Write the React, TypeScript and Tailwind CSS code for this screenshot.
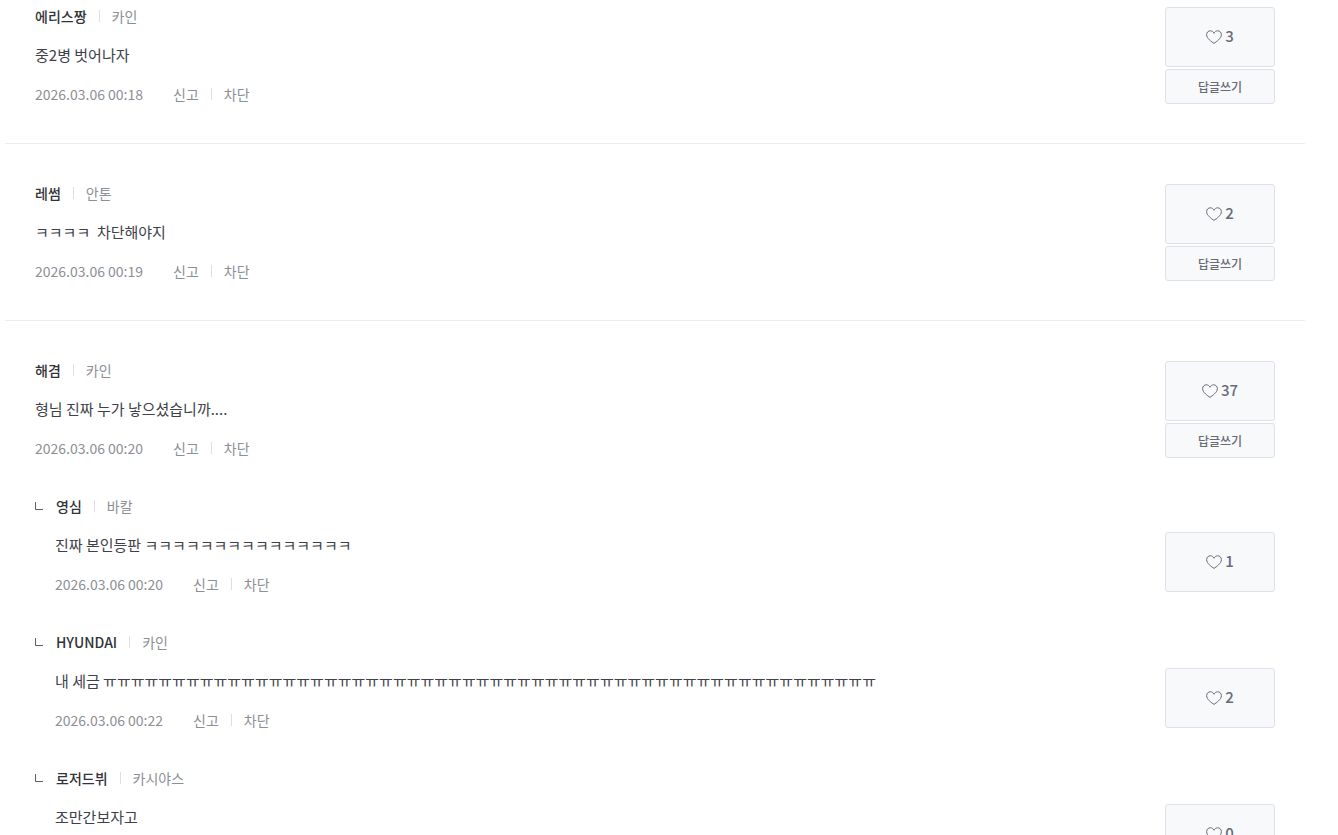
type Reply = {
  name: string;
  server: string;
  text: string;
  date?: string;
  likes: number;
};

type Comment = Reply & { replies?: Reply[] };

const COMMENTS: Comment[] = [
  { name: "에리스짱", server: "카인", text: "중2병 벗어나자", date: "2026.03.06 00:18", likes: 3 },
  { name: "레썸", server: "안톤", text: "ㅋㅋㅋㅋ  차단해야지", date: "2026.03.06 00:19", likes: 2 },
  {
    name: "해겸",
    server: "카인",
    text: "형님 진짜 누가 낳으셨습니까....",
    date: "2026.03.06 00:20",
    likes: 37,
    replies: [
      { name: "영심", server: "바칼", text: "진짜 본인등판 " + "ㅋ".repeat(15), date: "2026.03.06 00:20", likes: 1 },
      { name: "HYUNDAI", server: "카인", text: "내 세금 " + "ㅠ".repeat(56), date: "2026.03.06 00:22", likes: 2 },
      { name: "로저드뷔", server: "카시야스", text: "조만간보자고", likes: 0 },
    ],
  },
];

function Divider() {
  return <span className="mx-3 h-3 w-px bg-[#dcdee3]" />;
}

function CommentBody({ name, server, text, date, reply }: Reply & { reply?: boolean }) {
  return (
    <div className="flex min-w-0 flex-1 flex-col gap-[15px]">
      <div className="flex h-6 items-center text-sm">
        {reply && (
          <svg className="mr-3 shrink-0" width="9" height="8" viewBox="0 0 9 8" fill="none" stroke="#5a5d64">
            <path d="M.5 0v7.5H8" />
          </svg>
        )}
        <strong className="font-medium text-[#313338]">{name}</strong>
        <Divider />
        <span className="text-[#8c8f96]">{server}</span>
      </div>
      <p className={`text-[15px] leading-6 whitespace-pre-wrap text-[#3e4149] ${reply ? "pl-5" : ""}`}>{text}</p>
      {date && (
        <div className={`flex h-6 items-center text-sm text-[#8c8f96] ${reply ? "pl-5" : ""}`}>
          <time className="mr-[30px]">{date}</time>
          <button type="button">신고</button>
          <Divider />
          <button type="button">차단</button>
        </div>
      )}
    </div>
  );
}

function LikeButton({ likes }: { likes: number }) {
  return (
    <button
      type="button"
      aria-label={`좋아요 ${likes}`}
      className="flex h-[60px] w-full items-center justify-center gap-[3px] rounded-[3px] border border-[#dfe1ea] bg-[#f7f9fb] text-[15px] leading-5 font-medium text-[#686b78]"
    >
      <svg width="16" height="14" viewBox="0 0 16 14" fill="none" stroke="currentColor" strokeWidth="1">
        <path d="M8 13.400C5.700 11.800.6 8.400.6 4.700.6 2.400 2.300.8 4.300.8 5.900.8 7.300 1.700 8 3.300 8.700 1.700 10.100.8 11.700.8c2 0 3.700 1.600 3.700 3.900 0 3.700-5.100 7.100-7.400 8.700z" />
      </svg>
      <span className="pb-0.5">{likes}</span>
    </button>
  );
}

export default function App() {
  return (
    <main className="h-screen overflow-hidden bg-white pr-[33px] pl-[5px] font-['Noto_Sans_CJK_KR','Noto_Sans',sans-serif]">
      <ul className="pt-1">
        {COMMENTS.map(({ replies = [], ...comment }) => (
          <li key={comment.name} className="mb-[37px] border-b border-[#ebecef] px-[30px] pb-[37px] last:border-0">
            <div className="flex items-center">
              <CommentBody {...comment} />
              <div className="flex w-[110px] shrink-0 flex-col gap-0.5">
                <LikeButton likes={comment.likes} />
                <button
                  type="button"
                  className="h-[35px] rounded-[3px] border border-[#dfe1ea] bg-[#f7f9fb] pt-0.5 text-xs font-medium text-[#686b78]"
                >
                  답글쓰기
                </button>
              </div>
            </div>
            {replies.length > 0 && (
              <ul>
                {replies.map((reply) => (
                  <li key={reply.name} className="flex items-start pt-[34px]">
                    <CommentBody {...reply} reply />
                    <div className="w-[110px] shrink-0 pt-[38px]">
                      <LikeButton likes={reply.likes} />
                    </div>
                  </li>
                ))}
              </ul>
            )}
          </li>
        ))}
      </ul>
    </main>
  );
}
